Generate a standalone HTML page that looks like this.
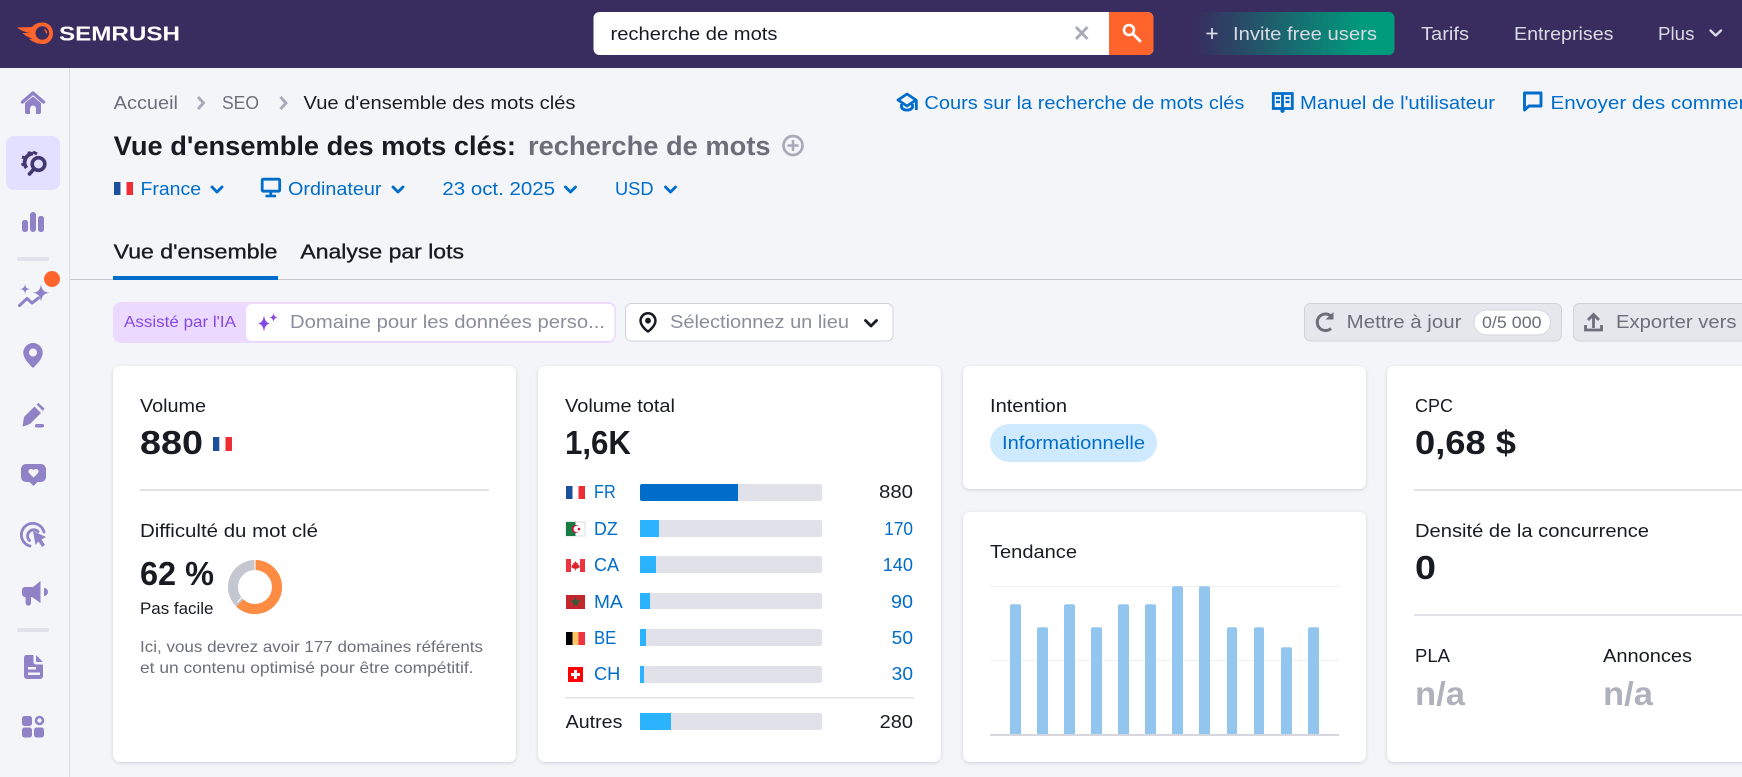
<!DOCTYPE html>
<html lang="fr"><head><meta charset="utf-8"><title>Vue d'ensemble des mots clés</title>
<style>
html,body{margin:0;padding:0;width:1742px;height:777px;overflow:hidden;background:#f4f5f9}
svg{display:block}
text{font-family:"Liberation Sans",Arial,sans-serif;font-size:18.5px;fill:#191b23}
.l{fill:#006dca}.g{fill:#6c6e79}.h{fill:#d9dae4}
.b{font-weight:700;font-size:33.5px}
.t{font-weight:700;font-size:27px}
.m{font-size:20.5px;stroke:#191b23;stroke-width:.35px}
.s{font-size:16px}
.side{fill:#8f82c7}
.card{fill:#fff;filter:url(#sh)}
.chev{fill:none;stroke:#006dca;stroke-width:2.9;stroke-linecap:round;stroke-linejoin:round}
.bar{fill:#93c6ee}
.tr{fill:#e0e1e9}.fi{fill:#2bb3ff}
.dv{fill:#e0e1e9}
</style></head><body>
<svg xmlns="http://www.w3.org/2000/svg" width="1742" height="777" viewBox="0 0 1742 777">
<defs>
<filter id="sh" x="-5%" y="-5%" width="110%" height="110%"><feDropShadow dx="0" dy="1" stdDeviation="1.5" flood-color="#191b23" flood-opacity=".16"/></filter>
<linearGradient id="gr" x1="0" x2="1" y1="0" y2="0"><stop offset="0" stop-color="#382d5e"/><stop offset=".85" stop-color="#009b7d"/><stop offset="1" stop-color="#009b7d"/></linearGradient>
</defs>
<rect width="1742" height="777" fill="#f4f5f9"/>

<!-- header -->
<rect width="1742" height="68" fill="#382d5e"/>
<path d="M17 27.5 L32 27 C34.500 24 38 22.500 42.500 22.500 C48.500 22.500 53 27 53 33.200 C53 39.500 48.500 44 42.500 44 C37.500 44 33 42 29 39 L32.500 38.500 C28.500 37.500 25 35.500 22.500 33 L29.500 33 C25 32 20 30 17 27.5Z" fill="#ff642d"/>
<circle cx="42.300" cy="33" r="6.800" fill="#382d5e"/>
<path d="M44.500 29.500 A4.500 4.500 0 0 1 46.500 33.500" fill="none" stroke="#ff642d" stroke-width="1.400"/>
<text x="59" y="40.500" textLength="121" lengthAdjust="spacingAndGlyphs" style="font-size:20px;font-weight:700;fill:#fff">SEMRUSH</text>

<rect x="593.500" y="12" width="560" height="43" rx="6" fill="#fff"/>
<path d="M1109 12 H1147.500 a6 6 0 0 1 6 6 V49 a6 6 0 0 1 -6 6 H1109Z" fill="#ff642d"/>
<text x="610.500" y="40" textLength="167" lengthAdjust="spacingAndGlyphs">recherche de mots</text>
<path d="M1076 27 L1087.500 39 M1087.500 27 L1076 39" stroke="#a8abb7" stroke-width="2.800" fill="none"/>
<circle cx="1129" cy="30" r="5" fill="none" stroke="#fff" stroke-width="2.600"/><path d="M1133 34 L1140 41" stroke="#fff" stroke-width="2.800" stroke-linecap="round"/>

<rect x="1195" y="12" width="199.500" height="43" rx="6" fill="url(#gr)"/>
<path d="M1212 28 V39 M1206.500 33.500 H1217.500" stroke="#d9dae4" stroke-width="1.800"/>
<text class="h" x="1233" y="40" textLength="144" lengthAdjust="spacingAndGlyphs">Invite free users</text>
<text class="h" x="1421" y="40" textLength="48" lengthAdjust="spacingAndGlyphs">Tarifs</text>
<text class="h" x="1514" y="40" textLength="99.500" lengthAdjust="spacingAndGlyphs">Entreprises</text>
<text class="h" x="1658" y="40" textLength="36.500" lengthAdjust="spacingAndGlyphs">Plus</text>
<path d="M1710.500 30.500 L1715.700 35.500 L1721 30.500" fill="none" stroke="#d9dae4" stroke-width="2.400" stroke-linecap="round" stroke-linejoin="round"/>

<!-- sidebar -->
<rect x="69" y="68" width="1" height="709" fill="#dcdde5"/>
<path d="M22.500 102 L33 93 L43.500 102" fill="none" stroke="#8f82c7" stroke-width="3.400" stroke-linecap="round" stroke-linejoin="round"/>
<path class="side" d="M25 103 L33 96.500 L41 103 V112 a2 2 0 0 1 -2 2 H36 V108.500 a3 3 0 0 0 -6 0 V114 H27 a2 2 0 0 1 -2 -2Z"/>
<rect x="6" y="136" width="54" height="54" rx="8" fill="#e3dffe"/>
<g fill="none" stroke="#423770">
<circle cx="38.500" cy="164" r="6.300" stroke-width="3.600"/>
<path d="M33.500 169.500 L29.500 174" stroke-width="3.600" stroke-linecap="round"/>
<path d="M33 153.500 A9 9 0 0 0 26.500 168" stroke-width="3.800"/>
<path d="M29 151.500 L29.500 155 M22 157 L25.500 158 M21.500 165 L25 163.500" stroke-width="3"/>
<path d="M33 152 L37 154" stroke-width="3"/>
</g>
<g class="side">
<rect x="22" y="220" width="6" height="12" rx="2.500"/><rect x="30" y="212" width="6" height="20" rx="3"/><rect x="38" y="216" width="6" height="16" rx="2.500"/>
</g>
<rect x="17" y="257" width="32" height="4" rx="2" fill="#e0e1e9"/>
<path class="side" d="M41 284.500 C42 290 43.500 292 49.500 292.800 C43.500 293.700 42 296 41 301.500 C40 296 38.500 293.700 32.500 292.800 C38.500 292 40 290 41 284.500Z"/>
<path class="side" d="M25 284 C25.600 287.500 26.500 288.400 30 289 C26.500 289.600 25.600 290.500 25 294 C24.400 290.500 23.500 289.600 20 289 C23.500 288.400 24.400 287.500 25 284Z"/>
<path d="M19.500 305.500 L27 298.500 L32 303 L38.500 298" fill="none" stroke="#8f82c7" stroke-width="3" stroke-linecap="round" stroke-linejoin="round"/>
<circle cx="52" cy="279" r="8" fill="#ff642d"/>
<path class="side" fill-rule="evenodd" d="M33 343 A9.700 9.700 0 0 0 23.300 352.700 C23.300 358.500 29 364 33 368 C37 364 42.700 358.500 42.700 352.700 A9.700 9.700 0 0 0 33 343Z M33 348.500 a4 4 0 1 1 0 8 a4 4 0 1 1 0 -8Z"/>
<path class="side" d="M22.500 426.500 L24 417 L34.500 406.500 L41 413 L30.500 423.500 C28 425 25.500 426 22.500 426.500Z M36.500 404.500 L38.500 403 L44.500 408.500 L43 411 Z"/>
<rect x="35" y="424" width="9" height="3.500" rx="1.700" class="side"/>
<path class="side" fill-rule="evenodd" d="M26 464 H41 a5 5 0 0 1 5 5 V477 a5 5 0 0 1 -5 5 H37.500 L33.500 486 L29.500 482 H26 a5 5 0 0 1 -5 -5 V469 a5 5 0 0 1 5 -5Z M33.500 477.500 L29 473 C27.300 470.500 30 467.500 33.500 470 C37 467.500 39.700 470.500 38 473Z"/>
<g fill="none" stroke="#8f82c7" stroke-width="2.800" stroke-linecap="round">
<path d="M30 546 A11.500 11.500 0 1 1 44 532"/>
<path d="M29.500 540.500 A6 6 0 1 1 38 531.500"/>
</g>
<path class="side" d="M33 531 L46 537 L41.500 539.500 L45 545 L42 547 L38.500 541.500 L35.500 545Z"/>
<path class="side" d="M40.500 581 V603 L32 597 H31 V603 a2.700 2.700 0 0 1 -5.400 0 V597 H25 a3 3 0 0 1 -3 -3 V590 a3 3 0 0 1 3 -3 H33Z"/>
<path class="side" d="M44 588 a4 4 0 0 1 0 8Z"/>
<rect x="17" y="628" width="32" height="4" rx="2" fill="#e0e1e9"/>
<path class="side" fill-rule="evenodd" d="M26.500 655 H33.500 V662 a2.500 2.500 0 0 0 2.500 2.500 H43 V676 a3 3 0 0 1 -3 3 H27 a3 3 0 0 1 -3 -3 V657.500 a2.500 2.500 0 0 1 2.500 -2.500Z M28 667 v2.500 h8 v-2.500Z M28 672.500 v2.500 h12 v-2.500Z"/>
<path class="side" d="M36 655 L43 662 H37 a1 1 0 0 1 -1 -1Z"/>
<g class="side">
<rect x="22" y="716" width="10" height="10" rx="2.500"/><rect x="22" y="727.500" width="10" height="10" rx="2.500"/><rect x="34" y="727.500" width="10" height="10" rx="2.500"/>
</g>
<circle cx="39.500" cy="720.500" r="3.500" fill="none" stroke="#8f82c7" stroke-width="2.600"/>

<!-- breadcrumb -->
<text class="g" x="113.700" y="109" textLength="64.300" lengthAdjust="spacingAndGlyphs">Accueil</text>
<path d="M198 97 L203.500 103 L198 109" fill="none" stroke="#a8abb7" stroke-width="2.900"/>
<text class="g" x="222" y="109" textLength="37" lengthAdjust="spacingAndGlyphs">SEO</text>
<path d="M280.500 97 L286 103 L280.500 109" fill="none" stroke="#a8abb7" stroke-width="2.900"/>
<text x="303.500" y="109" textLength="272" lengthAdjust="spacingAndGlyphs">Vue d'ensemble des mots clés</text>

<!-- links -->
<g fill="none" stroke="#006dca" stroke-width="2.800" stroke-linejoin="round">
<path d="M898 100 L907 94 L916 100 L907 106Z"/>
<path d="M901.500 104 V107.500 C904 111 910 111 912.500 107.500 V104"/>
<path d="M916.300 100 V110"/>
</g>
<text class="l" x="924.400" y="109" textLength="320" lengthAdjust="spacingAndGlyphs">Cours sur la recherche de mots clés</text>
<path d="M1273.300 93.500 H1282.500 V108.500 H1273.300Z M1282.500 93.500 H1292.300 V108.500 H1282.500Z" fill="none" stroke="#006dca" stroke-width="2.800"/>
<path d="M1276 98 h4 M1276 102 h4 M1285.500 98 h4 M1285.500 102 h4" stroke="#006dca" stroke-width="2.200"/>
<path d="M1280.500 109 h4 v3 l-2 1 l-2 -1z" fill="#006dca"/>
<text class="l" x="1300" y="109" textLength="195" lengthAdjust="spacingAndGlyphs">Manuel de l'utilisateur</text>
<path d="M1524.500 93 H1541 V106 H1529 L1524.500 110Z" fill="none" stroke="#006dca" stroke-width="2.900" stroke-linejoin="round"/>
<text class="l" x="1550.500" y="109" textLength="250" lengthAdjust="spacingAndGlyphs">Envoyer des commentaires</text>

<!-- title -->
<text class="t" x="113.700" y="155" textLength="402.300" lengthAdjust="spacingAndGlyphs">Vue d'ensemble des mots clés:</text>
<text class="t g" x="528" y="155" textLength="242.600" lengthAdjust="spacingAndGlyphs">recherche de mots</text>
<circle cx="793" cy="145.500" r="9.500" fill="none" stroke="#a8abb7" stroke-width="2.700"/>
<path d="M793 140 V151 M787.500 145.500 H798.500" stroke="#a8abb7" stroke-width="2.500"/>

<!-- filters -->
<g transform="translate(114,182)"><rect width="6.500" height="13" fill="#1d4f9f"/><rect x="6.500" width="6" height="13" fill="#fff"/><rect x="12.500" width="6.500" height="13" fill="#ee2d35"/></g>
<text class="l" x="140.500" y="195" textLength="60.500" lengthAdjust="spacingAndGlyphs">France</text>
<path class="chev" d="M212 187 L217 192 L222 187"/>
<rect x="262.200" y="179.200" width="17.500" height="12" rx="1" fill="none" stroke="#006dca" stroke-width="2.800"/>
<path d="M270.800 191 V195" stroke="#006dca" stroke-width="2.800"/><path d="M265.500 196 H276" stroke="#006dca" stroke-width="2.600"/>
<text class="l" x="288" y="195" textLength="93.500" lengthAdjust="spacingAndGlyphs">Ordinateur</text>
<path class="chev" d="M393 187 L398 192 L403 187"/>
<text class="l" x="442.400" y="195" textLength="112.600" lengthAdjust="spacingAndGlyphs">23 oct. 2025</text>
<path class="chev" d="M565.500 187 L570.500 192 L575.500 187"/>
<text class="l" x="615" y="195" textLength="38.500" lengthAdjust="spacingAndGlyphs">USD</text>
<path class="chev" d="M665.500 187 L670.500 192 L675.500 187"/>

<!-- tabs -->
<rect x="70" y="279" width="1672" height="1" fill="#c4c7cf"/>
<text class="m" x="113.700" y="258.500" textLength="163.800" lengthAdjust="spacingAndGlyphs">Vue d'ensemble</text>
<text class="m" x="300.400" y="258.500" textLength="163.600" lengthAdjust="spacingAndGlyphs">Analyse par lots</text>
<rect x="113" y="276" width="165" height="4" fill="#006dca"/>

<!-- AI row -->
<rect x="113" y="302" width="503" height="41" rx="8" fill="#ecd9ff"/>
<rect x="246" y="304" width="368.500" height="37" rx="6" fill="#fff"/>
<text x="124" y="327" textLength="112" lengthAdjust="spacingAndGlyphs" style="font-size:15.500px;fill:#8649e1">Assisté par l'IA</text>
<path d="M265 316 C266 321 267 323 271 324 C267 325 266 327 265 332 C264 327 263 325 259 324 C263 323 264 321 265 316Z" transform="translate(-1,-0.500)" fill="#8649e1"/>
<path d="M273.500 313 C274 316 275 317 277.500 317.500 C275 318 274 319 273.500 322 C273 319 272 318 269.500 317.500 C272 317 273 316 273.500 313Z" fill="#8649e1"/>
<text x="290" y="328" textLength="315" lengthAdjust="spacingAndGlyphs" style="fill:#8a8e9b">Domaine pour les données perso...</text>

<rect x="625.500" y="303.500" width="267.500" height="37.500" rx="6" fill="#fff" stroke="#d0d2da"/>
<path fill="#191b23" fill-rule="evenodd" d="M648 312 A8.700 8.700 0 0 0 639.300 320.700 C639.300 326 644.500 330.500 648 333 C651.500 330.500 656.700 326 656.700 320.700 A8.700 8.700 0 0 0 648 312Z M648 314.500 A6.200 6.200 0 0 1 654.200 320.700 C654.200 324.300 650.500 328 648 330 C645.500 328 641.800 324.300 641.800 320.700 A6.200 6.200 0 0 1 648 314.500Z M648 317.800 a2.900 2.900 0 1 1 0 5.800 a2.900 2.900 0 1 1 0 -5.800Z"/>
<text x="670" y="328" textLength="179" lengthAdjust="spacingAndGlyphs" style="fill:#8a8e9b">Sélectionnez un lieu</text>
<path d="M865.500 320.500 L871 326 L876.500 320.500" fill="none" stroke="#191b23" stroke-width="2.800" stroke-linecap="round" stroke-linejoin="round"/>

<rect x="1304.500" y="303.500" width="257" height="37.500" rx="6" fill="#e6e7ed" stroke="#d0d2da"/>
<path d="M1331 316 A8.300 8.300 0 1 0 1331 328.500" fill="none" stroke="#6c6e79" stroke-width="3"/>
<path d="M1325.500 319.500 H1333.500 V312Z" fill="#6c6e79"/>
<text class="g" x="1346.700" y="328" textLength="114.700" lengthAdjust="spacingAndGlyphs">Mettre à jour</text>
<rect x="1474" y="310" width="76.500" height="25" rx="12.500" fill="#fff" stroke="#d5d7df"/>
<text class="g" x="1482" y="328" textLength="59.600" lengthAdjust="spacingAndGlyphs" style="font-size:16.500px">0/5 000</text>
<rect x="1573.500" y="303.500" width="190" height="37.500" rx="6" fill="#e6e7ed" stroke="#d0d2da"/>
<path d="M1593.500 328 V315 M1588 320 L1593.500 314.500 L1599 320" fill="none" stroke="#6c6e79" stroke-width="2.800"/>
<path d="M1585.500 325 V330 H1601.500 V325" fill="none" stroke="#6c6e79" stroke-width="2.800"/>
<text class="g" x="1616" y="328" textLength="120.500" lengthAdjust="spacingAndGlyphs">Exporter vers</text>

<!-- cards -->
<rect class="card" x="113" y="366" width="403" height="396" rx="7"/>
<rect class="card" x="538" y="366" width="403" height="396" rx="7"/>
<rect class="card" x="963" y="366" width="403" height="123" rx="7"/>
<rect class="card" x="963" y="512" width="403" height="250" rx="7"/>
<rect class="card" x="1387" y="366" width="403" height="396" rx="7"/>

<!-- card 1 -->
<text x="140" y="412" textLength="66" lengthAdjust="spacingAndGlyphs">Volume</text>
<text class="b" x="140" y="454" textLength="63" lengthAdjust="spacingAndGlyphs">880</text>
<g transform="translate(213,437)"><rect width="6.500" height="14" fill="#1d4f9f"/><rect x="6.500" width="6" height="14" fill="#fff" stroke="#eee" stroke-width=".5"/><rect x="12.500" width="6.500" height="14" fill="#ee2d35"/></g>
<rect class="dv" x="140" y="489" width="349" height="2"/>
<text x="140" y="537" textLength="178" lengthAdjust="spacingAndGlyphs">Difficulté du mot clé</text>
<text class="b" x="140" y="585" textLength="74" lengthAdjust="spacingAndGlyphs">62 %</text>
<text x="140" y="614" textLength="73.500" lengthAdjust="spacingAndGlyphs" style="font-size:16.500px">Pas facile</text>
<circle cx="255" cy="587" r="22" fill="none" stroke="#c4c7cf" stroke-width="10"/>
<circle cx="255" cy="587" r="22" fill="none" stroke="#ff8c43" stroke-width="10" stroke-dasharray="85.700 52.500" transform="rotate(-90 255 587)"/>
<path d="M255 560 V570 M237.500 602 L243.500 596" stroke="#fff" stroke-width="1"/>
<text class="g" x="140" y="652" textLength="343" lengthAdjust="spacingAndGlyphs" style="font-size:16px">Ici, vous devrez avoir 177 domaines référents</text>
<text class="g" x="140" y="673" textLength="333.500" lengthAdjust="spacingAndGlyphs" style="font-size:16px">et un contenu optimisé pour être compétitif.</text>

<!-- card 2 -->
<text x="565" y="412" textLength="110" lengthAdjust="spacingAndGlyphs">Volume total</text>
<text class="b" x="565" y="454" textLength="66" lengthAdjust="spacingAndGlyphs">1,6K</text>

<g transform="translate(566,486)"><rect width="6.500" height="13" fill="#1d4f9f"/><rect x="6.500" width="6" height="13" fill="#fff"/><rect x="12.500" width="6.500" height="13" fill="#ee2d35"/></g>
<text class="l" x="594" y="498" textLength="21.700" lengthAdjust="spacingAndGlyphs">FR</text>
<rect class="tr" x="640" y="484" width="182" height="17" rx="2"/><path d="M642 484 H738 V501 H642 a2 2 0 0 1 -2 -2 V486 a2 2 0 0 1 2 -2Z" fill="#006dca"/>
<text x="879" y="498" textLength="34" lengthAdjust="spacingAndGlyphs">880</text>

<g transform="translate(566,522)"><rect width="19" height="14" fill="#fff" stroke="#c8c8c8" stroke-width=".6"/><rect width="9.500" height="14" fill="#1a7a44"/><circle cx="9.800" cy="7" r="4" fill="#d21034"/><circle cx="10.800" cy="7" r="3.200" fill="#fff"/><circle cx="13" cy="7" r="1.300" fill="#d21034"/></g>
<text class="l" x="594" y="535" textLength="23.700" lengthAdjust="spacingAndGlyphs">DZ</text>
<rect class="tr" x="640" y="520" width="182" height="17" rx="2"/><rect class="fi" x="640" y="520" width="19" height="17"/>
<text class="l" x="884.300" y="535" textLength="28.700" lengthAdjust="spacingAndGlyphs">170</text>

<g transform="translate(566,559)"><rect width="19" height="13" fill="#fff"/><rect width="5" height="13" fill="#ef3340"/><rect x="14" width="5" height="13" fill="#ef3340"/><path d="M9.500 2 L10.700 4.200 L12 3.700 L11.600 6.300 L13.500 5.600 L13 7.300 L14 8 L11 9.800 L9.900 9.500 V11.500 H9.100 V9.500 L8 9.800 L5 8 L6 7.300 L5.500 5.600 L7.400 6.300 L7 3.700 L8.300 4.200Z" fill="#e01e26"/></g>
<text class="l" x="594" y="571" textLength="25" lengthAdjust="spacingAndGlyphs">CA</text>
<rect class="tr" x="640" y="556" width="182" height="17" rx="2"/><rect class="fi" x="640" y="556" width="16" height="17"/>
<text class="l" x="882.700" y="571" textLength="30.300" lengthAdjust="spacingAndGlyphs">140</text>

<g transform="translate(566,595)"><rect width="19" height="14" fill="#c1272d"/><path d="M9.500 3.500 L11.200 9.800 L6 6 H13 L7.800 9.800Z" fill="none" stroke="#0f6b3c" stroke-width="1"/></g>
<text class="l" x="594" y="608" textLength="28.700" lengthAdjust="spacingAndGlyphs">MA</text>
<rect class="tr" x="640" y="593" width="182" height="16" rx="2"/><rect class="fi" x="640" y="593" width="10" height="16"/>
<text class="l" x="891" y="608" textLength="22" lengthAdjust="spacingAndGlyphs">90</text>

<g transform="translate(566,632)"><rect width="6.500" height="13" fill="#000"/><rect x="6.500" width="6" height="13" fill="#fdc65e"/><rect x="12.500" width="6.500" height="13" fill="#ee3340"/></g>
<text class="l" x="594" y="644" textLength="22.300" lengthAdjust="spacingAndGlyphs">BE</text>
<rect class="tr" x="640" y="629" width="182" height="17" rx="2"/><rect class="fi" x="640" y="629" width="6" height="17"/>
<text class="l" x="891.700" y="644" textLength="21.300" lengthAdjust="spacingAndGlyphs">50</text>

<g transform="translate(568,667)"><rect width="15" height="15" fill="#f00"/><rect x="6" y="3" width="3" height="9" fill="#fff"/><rect x="3" y="6" width="9" height="3" fill="#fff"/></g>
<text class="l" x="594" y="680" textLength="26.300" lengthAdjust="spacingAndGlyphs">CH</text>
<rect class="tr" x="640" y="666" width="182" height="17" rx="2"/><rect class="fi" x="640" y="666" width="4" height="17"/>
<text class="l" x="891.700" y="680" textLength="21.300" lengthAdjust="spacingAndGlyphs">30</text>

<rect class="dv" x="565" y="697" width="349" height="1.500"/>
<text x="565.700" y="728" textLength="56.700" lengthAdjust="spacingAndGlyphs">Autres</text>
<rect class="tr" x="640" y="713" width="182" height="17" rx="2"/><rect class="fi" x="640" y="713" width="31" height="17"/>
<text x="879.700" y="728" textLength="33.300" lengthAdjust="spacingAndGlyphs">280</text>

<!-- card 3 -->
<text x="990" y="412" textLength="77" lengthAdjust="spacingAndGlyphs">Intention</text>
<rect x="990" y="424" width="167" height="38" rx="19" fill="#cfeaff"/>
<text class="l" x="1002" y="449" textLength="143" lengthAdjust="spacingAndGlyphs">Informationnelle</text>

<!-- card 4 -->
<text x="990" y="558" textLength="87" lengthAdjust="spacingAndGlyphs">Tendance</text>
<rect x="990" y="586" width="349" height="1" fill="#eff0f3"/>
<rect x="990" y="660" width="349" height="1" fill="#eff0f3"/>
<path class="bar" d="M1010 734 V606.300 a2 2 0 0 1 2 -2 H1019 a2 2 0 0 1 2 2 V734Z"/>
<path class="bar" d="M1037 734 V629.300 a2 2 0 0 1 2 -2 H1046 a2 2 0 0 1 2 2 V734Z"/>
<path class="bar" d="M1064 734 V606.300 a2 2 0 0 1 2 -2 H1073 a2 2 0 0 1 2 2 V734Z"/>
<path class="bar" d="M1091 734 V629.300 a2 2 0 0 1 2 -2 H1100 a2 2 0 0 1 2 2 V734Z"/>
<path class="bar" d="M1118 734 V606.300 a2 2 0 0 1 2 -2 H1127 a2 2 0 0 1 2 2 V734Z"/>
<path class="bar" d="M1145 734 V606.300 a2 2 0 0 1 2 -2 H1154 a2 2 0 0 1 2 2 V734Z"/>
<path class="bar" d="M1172 734 V588.300 a2 2 0 0 1 2 -2 H1181 a2 2 0 0 1 2 2 V734Z"/>
<path class="bar" d="M1199 734 V588.300 a2 2 0 0 1 2 -2 H1208 a2 2 0 0 1 2 2 V734Z"/>
<path class="bar" d="M1227 734 V629.300 a2 2 0 0 1 2 -2 H1235 a2 2 0 0 1 2 2 V734Z"/>
<path class="bar" d="M1254 734 V629.300 a2 2 0 0 1 2 -2 H1262 a2 2 0 0 1 2 2 V734Z"/>
<path class="bar" d="M1281 734 V649.300 a2 2 0 0 1 2 -2 H1290 a2 2 0 0 1 2 2 V734Z"/>
<path class="bar" d="M1308 734 V629.300 a2 2 0 0 1 2 -2 H1317 a2 2 0 0 1 2 2 V734Z"/>
<rect x="990" y="734" width="349" height="2" fill="#d5d7df"/>

<!-- card 5 -->
<text x="1415" y="412" textLength="38" lengthAdjust="spacingAndGlyphs">CPC</text>
<text class="b" x="1415" y="454" textLength="101" lengthAdjust="spacingAndGlyphs">0,68 $</text>
<rect class="dv" x="1414" y="489" width="328" height="2"/>
<text x="1415" y="537" textLength="234" lengthAdjust="spacingAndGlyphs">Densité de la concurrence</text>
<text class="b" x="1415" y="579" textLength="21" lengthAdjust="spacingAndGlyphs">0</text>
<rect class="dv" x="1414" y="614" width="328" height="2"/>
<text x="1415" y="662" textLength="35" lengthAdjust="spacingAndGlyphs">PLA</text>
<text x="1603" y="662" textLength="89" lengthAdjust="spacingAndGlyphs">Annonces</text>
<text class="b" x="1415" y="705" textLength="50" lengthAdjust="spacingAndGlyphs" style="fill:#afb2bd">n/a</text>
<text class="b" x="1603" y="705" textLength="50" lengthAdjust="spacingAndGlyphs" style="fill:#afb2bd">n/a</text>
</svg>
</body></html>
